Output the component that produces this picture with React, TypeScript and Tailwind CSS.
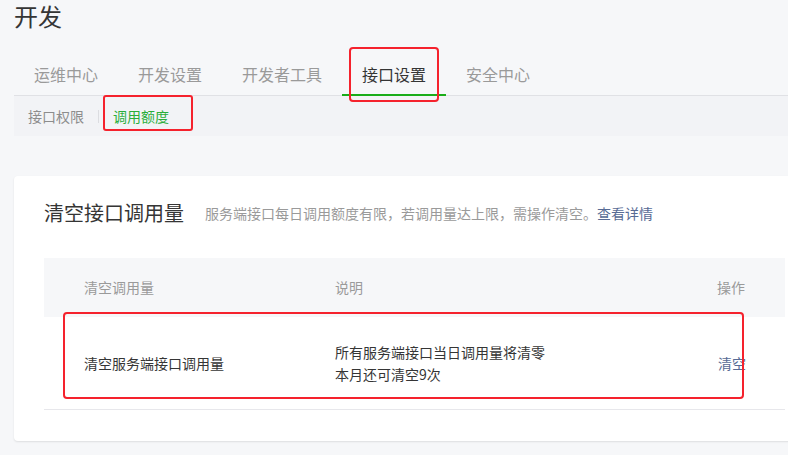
const tabs = ["运维中心", "开发设置", "开发者工具", "接口设置", "安全中心"];

export default function App() {
  return (
    <div
      className="min-h-[455px] w-full overflow-hidden bg-[#f6f7f9] text-[#353535]"
      style={{ fontFamily: '"Noto Sans CJK SC", "Noto Sans", sans-serif' }}
    >
      <div className="pl-[14px]">
        <h1 className="text-[24px] leading-8 font-normal">开发</h1>

        {/* 一级导航 */}
        <div className="mt-[22px] flex w-[900px] border-b border-[#e0e1e5]">
          {tabs.map((t) => {
            const active = t === "接口设置";
            return (
              <div
                key={t}
                className={
                  active
                    ? "relative -mb-px border-b-2 border-[#1aad19] px-5 pt-2 pb-2 text-[16px] leading-6 text-[#353535]"
                    : "relative -mb-px border-b-2 border-transparent px-5 pt-2 pb-2 text-[16px] leading-6 text-[#9a9a9a]"
                }
              >
                {t}
                {active && (
                  <div className="pointer-events-none absolute top-[-7px] left-[7px] h-[55px] w-[90px] rounded-[4px] border-2 border-[#f5222d]" />
                )}
              </div>
            );
          })}
        </div>

        {/* 二级导航 */}
        <div className="flex h-[40px] w-[900px] items-center bg-[#f2f3f6] text-[14px]">
          <div className="px-[14px] text-[#8d8d8d]">接口权限</div>
          <div className="h-[13px] w-px bg-[#dcdde1]" />
          <div className="relative px-[14px] text-[#2aae3a]">
            调用额度
            <div className="pointer-events-none absolute top-[-11px] left-[4px] h-[36px] w-[90px] rounded-[3px] border-2 border-[#f5222d]" />
          </div>
        </div>

        {/* 卡片 */}
        <div className="mt-[40px] w-[801px] rounded-[4px] bg-white px-[30px] pt-[23px] pb-[31px] shadow-[0_1px_2px_rgba(0,0,0,0.1)]">
          <div className="flex items-center">
            <h2 className="text-[20px] leading-7 font-normal text-[#353535]">清空接口调用量</h2>
            <p className="ml-[21px] text-[14px] text-[#9a9a9a]">
              服务端接口每日调用额度有限，若调用量达上限，需操作清空。
              <a className="text-[#576b95]" href="#">
                查看详情
              </a>
            </p>
          </div>

          <div className="mt-[31px] text-[14px]">
            <div className="grid h-[59px] grid-cols-[251px_382px_1fr] items-center bg-[#f6f7f9] text-[#9a9a9a]">
              <div className="pl-[40px]">清空调用量</div>
              <div className="pl-[40px]">说明</div>
              <div className="pl-[40px]">操作</div>
            </div>
            <div className="relative grid h-[93px] grid-cols-[251px_382px_1fr] items-center border-b border-[#e7e7eb] text-[#353535]">
              <div className="pl-[40px]">清空服务端接口调用量</div>
              <div className="pl-[40px] leading-[22px]">
                <div>所有服务端接口当日调用量将清零</div>
                <div>本月还可清空9次</div>
              </div>
              <div className="pl-[41px]">
                <a className="text-[#576b95]" href="#">
                  清空
                </a>
              </div>
              <div className="pointer-events-none absolute top-[-5px] left-[19px] h-[87px] w-[681px] rounded-[4px] border-2 border-[#f5222d]" />
            </div>
          </div>
        </div>
      </div>
    </div>
  );
}
